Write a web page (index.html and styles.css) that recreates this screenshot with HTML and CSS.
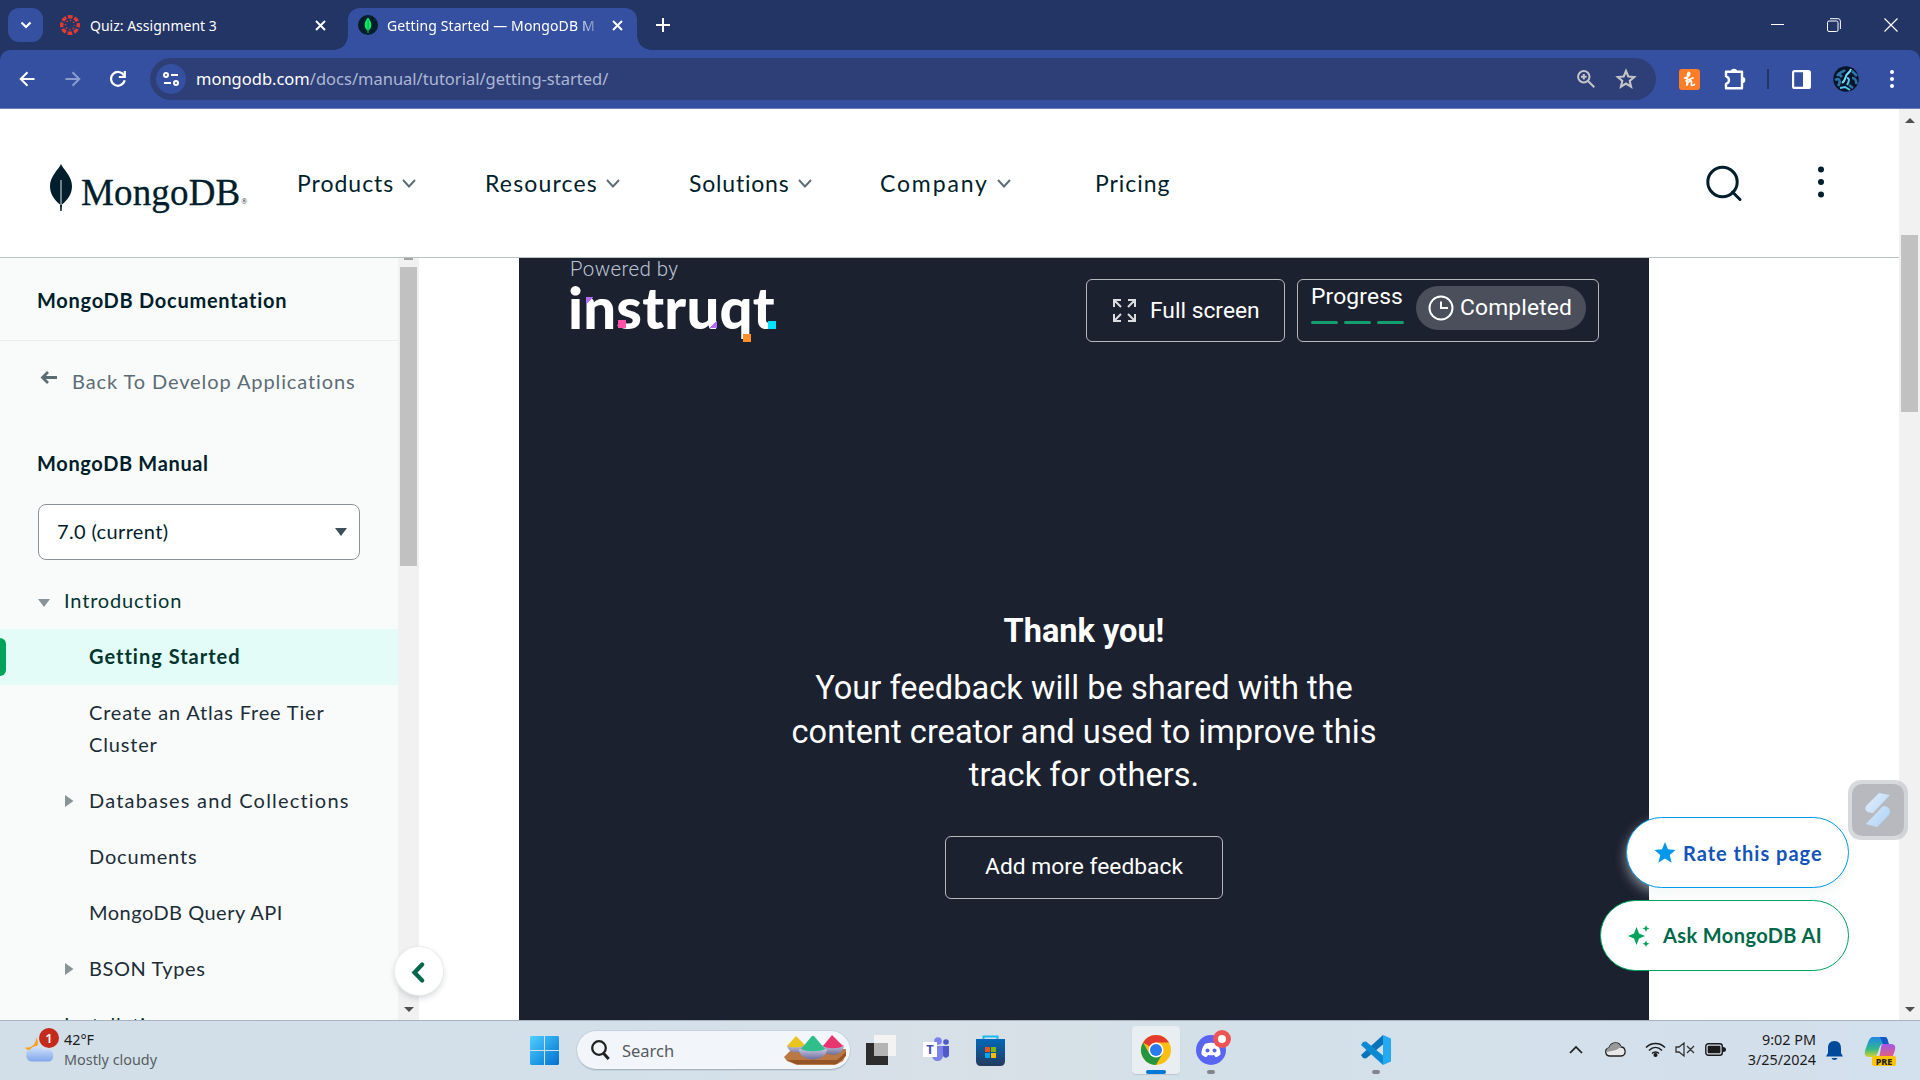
FILE: index.html
```
<!DOCTYPE html>
<html lang="en">
<head>
<meta charset="utf-8">
<title>Getting Started — MongoDB Manual</title>
<link rel="stylesheet" href="styles.css">
</head>
<body>
<header class="tabstrip">
  <div class="tab-search"><svg width="12" height="8" viewBox="0 0 12 8"><path d="M1.500 1.500 6 6l4.500-4.500" fill="none" stroke="#fff" stroke-width="2.200"/></svg></div>
  <div class="tab">
    <svg class="favicon" width="20" height="20" viewBox="0 0 20 20"><circle cx="10" cy="10" r="8.300" fill="none" stroke="#e23b34" stroke-width="3.400" stroke-dasharray="4.700 1.819" stroke-dashoffset="2.350"/><circle cx="10" cy="10" r="4.600" fill="none" stroke="#e23b34" stroke-width="1.500" stroke-dasharray="1.400 2.213" stroke-dashoffset=".7"/></svg>
    <span class="tab-title">Quiz: Assignment 3</span>
    <svg class="x" width="11" height="11" viewBox="0 0 11 11"><path d="m1 1 9 9M10 1l-9 9" stroke="#fff" stroke-width="1.900"/></svg>
  </div>
  <div class="tab active">
    <svg class="favicon" width="20" height="20" viewBox="0 0 20 20"><circle cx="10" cy="10" r="10" fill="#001e2b"/><path d="M10 2.500c2 2.500 3.300 4.300 3.300 7.200 0 2.800-1.200 4.500-2.900 5.900V18h-.8v-2.400C8 14.200 6.700 12.500 6.700 9.700 6.700 6.800 8 5 10 2.500z" fill="#00ed64"/><path d="M10.100 5v11" stroke="#00a35c" stroke-width="1"/></svg>
    <span class="tab-title">Getting Started — MongoDB M</span>
    <svg class="x" width="11" height="11" viewBox="0 0 11 11"><path d="m1 1 9 9M10 1l-9 9" stroke="#fff" stroke-width="1.900"/></svg>
  </div>
  <svg class="plus" width="14" height="14" viewBox="0 0 14 14"><path d="M7 0v14M0 7h14" stroke="#fff" stroke-width="2"/></svg>
  <div class="window-controls">
    <svg width="13" height="13" viewBox="0 0 13 13"><path d="M0 6.500h13" stroke="#fff"/></svg>
    <svg width="14" height="14" viewBox="0 0 14 14" fill="none" stroke="#fff"><rect x=".5" y="3" width="10.500" height="10.500" rx="1.500"/><path d="M3 .7h8a2.400 2.400 0 0 1 2.400 2.400V11"/></svg>
    <svg width="14" height="14" viewBox="0 0 14 14"><path d="m.5.5 13 13M13.500.5l-13 13" stroke="#fff" stroke-width="1.200"/></svg>
  </div>
</header>
<div class="toolbar-back">
<nav class="toolbar">
  <svg width="16" height="16" viewBox="0 0 16 16" fill="none" stroke="#fff" stroke-width="2"><path d="M15.500 8H2M8.500 1.200 1.700 8l6.800 6.800"/></svg>
  <svg width="16" height="16" viewBox="0 0 16 16" fill="none" stroke="#8a9bce" stroke-width="2"><path d="M.5 8H14M7.500 1.200 14.300 8l-6.800 6.800"/></svg>
  <svg width="18" height="18" viewBox="0 0 18 18" fill="none" stroke="#fff" stroke-width="2.200"><path d="M15 5.500A6.900 6.900 0 1 0 15.700 10.300"/><path d="M15.800 1v6h-6"/></svg>
  <div class="omnibox">
    <span class="site-info"><svg width="18" height="14" viewBox="0 0 18 14" fill="none" stroke="#fff" stroke-width="2"><circle cx="4" cy="3" r="2"/><path d="M9 3h7M2 11h7"/><circle cx="14" cy="11" r="2"/></svg></span>
    <span class="url"><b>mongodb.com</b>/docs/manual/tutorial/getting-started/</span>
    <svg class="zoom" width="18" height="18" viewBox="0 0 18 18" fill="none" stroke="#c3c5c9" stroke-width="2"><circle cx="6.800" cy="6.800" r="5.700"/><path d="m11 11 6.300 6.300M6.800 4v5.600M4 6.800h5.600"/></svg>
    <svg width="20" height="20" viewBox="0 0 20 20"><path d="m10 2 2.300 5.500 5.900.5-4.500 3.900 1.400 5.800-5.100-3.100-5.100 3.100 1.400-5.800L1.800 8l5.900-.5z" fill="none" stroke="#c3c5c9" stroke-width="2.100"/></svg>
  </div>
  <svg class="honey" width="21" height="21" viewBox="0 0 21 21"><rect width="21" height="21" rx="3" fill="#ff7d27"/><path d="M5.500 9c4 .5 6.500-5 4.500-5.500C8.300 3 8 9 7.800 16.500c1-4.500 5.200-6.500 4.700-3-.3 2.500-.3 4 3 2M7 11.500l7-2.500" fill="none" stroke="#fff" stroke-width="1.700" stroke-linecap="round"/></svg>
  <svg class="puzzle" width="22" height="22" viewBox="0 0 22 22" fill="none" stroke="#fff" stroke-width="2.400" stroke-linejoin="round"><path d="M2 3.800h16V20.300H2v-4.500c4-1 4-6.500 0-7.500z"/><path d="M7.500 3.500C7.500.6 12.500.6 12.500 3.500M18.500 9.500c3 0 3 5 0 5" fill="#fff" stroke-width="1.200"/></svg>
  <i class="divider"></i>
  <svg class="panel-icon" width="19" height="19" viewBox="0 0 19 19"><rect x="1.100" y="1.100" width="16.800" height="16.800" rx="1.500" fill="none" stroke="#fff" stroke-width="2.200"/><path d="M11 1h7v17h-7z" fill="#fff"/></svg>
  <svg class="avatar" width="26" height="26" viewBox="0 0 26 26"><circle cx="13" cy="13" r="12.700" fill="#07142a"/><path d="M4 10c3-5 5-3 8-6M2 14c5-3 6 2 3 6M19 5l5 5M19 12c3 0 5 3 4 6M5 7l4 4M16 19l4 3" stroke="#2a75a6" stroke-width="2.600" fill="none"/><path d="M18 3c-1 4-4 4-5 7s-1 5-4 7" stroke="#79dcf5" stroke-width="2" fill="none"/><path d="M14 12c3 0 2 4 0 7M7 22l5-1 5 3" stroke="#58c8ea" stroke-width="2" fill="none"/></svg>
  <svg class="dots" width="4" height="18" viewBox="0 0 4 18" fill="#fff"><circle cx="2" cy="2" r="2"/><circle cx="2" cy="9" r="2"/><circle cx="2" cy="16" r="2"/></svg>
</nav>
</div>

<div class="viewport">
  <div class="page">
    <header class="site-header">
      <a class="brand"><svg width="22" height="47" viewBox="0 0 22 47"><path d="M11 0c2.500 5.500 11 12.500 11 22 0 8-4.300 14-10 18.500L11.700 47h-1.400L10 40.500C4.300 36 0 30 0 22 0 12.500 8.500 5.500 11 0z" fill="#001e2b"/><path d="M11 16v25" stroke="#dfe5e6" stroke-width="1"/></svg><span>MongoDB</span><small>®</small></a>
      <a class="nav products">Products<svg class="chev" viewBox="0 0 14 9"><path d="m1 1 6 6.500L13 1"/></svg></a>
      <a class="nav resources">Resources<svg class="chev" viewBox="0 0 14 9"><path d="m1 1 6 6.500L13 1"/></svg></a>
      <a class="nav solutions">Solutions<svg class="chev" viewBox="0 0 14 9"><path d="m1 1 6 6.500L13 1"/></svg></a>
      <a class="nav company">Company<svg class="chev" viewBox="0 0 14 9"><path d="m1 1 6 6.500L13 1"/></svg></a>
      <a class="nav pricing">Pricing</a>
      <svg class="site-search" width="36" height="36" viewBox="0 0 36 36" fill="none" stroke="#001e2b" stroke-width="3" stroke-linecap="round"><circle cx="16.500" cy="17" r="14.700"/><path d="m26.500 27 7.500 7.500"/></svg>
      <svg class="kebab" width="6" height="32" viewBox="0 0 6 32" fill="#001e2b"><circle cx="3" cy="3.500" r="3"/><circle cx="3" cy="16" r="3"/><circle cx="3" cy="28.500" r="3"/></svg>
    </header>
    <div class="body">
      <aside class="sidebar">
        <h2>MongoDB Documentation</h2>
        <a class="back"><svg width="17" height="13" viewBox="0 0 17 13" fill="none" stroke="#5c6c75" stroke-width="2.800"><path d="M17 6.500H2.500M8 1 2.500 6.500 8 12"/></svg><span>Back To Develop Applications</span></a>
        <h3>MongoDB Manual</h3>
        <div class="select"><span>7.0 (current)</span><svg width="12" height="8" viewBox="0 0 12 8"><path d="M0 0h12L6 8z" fill="#3d4f58"/></svg></div>
        <ul class="tree">
          <li class="top"><svg width="12" height="8" viewBox="0 0 12 8"><path d="M0 0h12L6 8z" fill="#889397"/></svg><span class="intro">Introduction</span></li>
          <li class="current"><span>Getting Started</span></li>
          <li class="two-line"><span>Create an Atlas Free Tier<br>Cluster</span></li>
          <li><svg width="9" height="12" viewBox="0 0 9 12"><path d="M0 0v12l8.500-6z" fill="#889397"/></svg><span class="databases">Databases and Collections</span></li>
          <li><span>Documents</span></li>
          <li><span class="query">MongoDB Query API</span></li>
          <li><svg width="9" height="12" viewBox="0 0 9 12"><path d="M0 0v12l8.500-6z" fill="#889397"/></svg><span class="bson">BSON Types</span></li>
          <li class="top last"><span>Installation</span></li>
        </ul>
      </aside>
      <div class="side-scroll"><i class="up"></i><i class="thumb"></i><i class="down"></i></div>
      <main>
        <section class="panel">
          <div class="panel-head">
            <div class="powered"><p>Powered by</p>
              <div class="instruqt">instruqt<i class="p1"></i><i class="p2"></i><i class="p3"></i><i class="p4"></i><i class="p5"></i></div>
            </div>
            <div class="outline full"><svg width="23" height="23" viewBox="0 0 23 23" fill="none" stroke="#dadce0" stroke-width="2"><path d="M1 8V1h7M1 1l7 7M15 1h7v7M22 1l-7 7M1 15v7h7M1 22l7-7M22 15v7h-7M22 22l-7-7"/></svg><span>Full screen</span></div>
            <div class="outline progress">
              <div class="steps"><span>Progress</span><div class="bars"><i></i><i></i><i></i></div></div>
              <div class="pill"><svg width="26" height="26" viewBox="0 0 26 26" fill="none" stroke="#fff" stroke-width="2"><circle cx="13" cy="13" r="11.500"/><path d="M13 6.500V13h7"/></svg><span>Completed</span></div>
            </div>
          </div>
          <div class="thanks">
            <h1>Thank you!</h1>
            <p>Your feedback will be shared with the<br>content creator and used to improve this<br>track for others.</p>
            <div class="outline add">Add more feedback</div>
          </div>
        </section>
      </main>
    </div>
  </div>
  <div class="page-scroll"><i class="up"></i><i class="thumb"></i><i class="down"></i></div>
  <div class="collapse"><svg width="14" height="21" viewBox="0 0 14 21" fill="none" stroke="#00684a" stroke-width="4.200" stroke-linecap="round"><path d="M10.200 3.500 2.500 11.500l7.700 8"/></svg></div>
  <div class="extension"><div><svg width="26" height="34" viewBox="0 0 26 34"><defs><linearGradient id="ext" x2="1" y2="1"><stop stop-color="#e4effa"/><stop offset="1" stop-color="#acd1f8"/></linearGradient></defs><path d="M14 0 25 2 8 20C-1 20-1 14 3 11zM1 31l17-18c7 0 9 6 5 10L12 34z" fill="url(#ext)"/></svg></div></div>
  <div class="fab rate"><svg width="22" height="21" viewBox="0 0 22 21"><path d="m11 0 3 7.300 7.500.6-5.700 5 1.800 7.800-6.600-4.200-6.600 4.200 1.800-7.800-5.700-5L8 7.300z" fill="#0498ec"/></svg><span>Rate this page</span></div>
  <div class="fab ask"><svg width="22" height="22" viewBox="0 0 22 22" fill="#00a35c"><path d="M8.500 2 11 8.500l6 2.500-6 2.500L8.500 20 6 13.500 0 11l6-2.500zM18 0l1 2.400 2.500 1-2.500 1L18 7l-1-2.600-2.500-1 2.500-1zM18 15.500l1 2.200 2.500 1-2.500 1-1 2.300-1-2.300-2.500-1 2.500-1z"/></svg><span>Ask MongoDB AI</span></div>
</div>

<footer class="taskbar">
  <div class="weather">
    <svg width="34" height="32" viewBox="0 0 34 32"><defs><linearGradient id="cl" x2="0" y2="1"><stop stop-color="#d5e5fb"/><stop offset="1" stop-color="#7fa5ea"/></linearGradient></defs><path d="M12 5c4 6 1 13-6 14-3 0-5-1-6-3 7 1 12-4 12-11z" fill="#f6a21d"/><path d="M7 31a7 7 0 0 1-1-13.500C9 13 18 13 20 19c5-2 10 0 10 6s-5 6-6 6z" fill="url(#cl)"/></svg>
    <b class="badge">1</b>
    <p>42°F<br><span>Mostly cloudy</span></p>
  </div>
  <svg class="windows" width="29" height="29" viewBox="0 0 29 29"><defs><linearGradient id="win" x2="1" y2="1"><stop stop-color="#4fd0ff"/><stop offset="1" stop-color="#006fd0"/></linearGradient></defs><path d="M1 0h13v14H0V1zM15 0h13l1 1v13H15zM0 15h14v14H1l-1-1zM15 15h14v13l-1 1H15z" fill="url(#win)"/></svg>
  <div class="search">
    <svg width="19" height="21" viewBox="0 0 19 21" fill="none" stroke="#222" stroke-width="2.300"><circle cx="8" cy="8" r="6.800"/><path d="m12.700 13.500 5 5.500" stroke-width="3"/></svg>
    <span>Search</span>
    <svg class="bowls" width="63" height="30" viewBox="0 0 63 30"><defs><linearGradient id="bowl" x2="0" y2="1"><stop stop-color="#c4c4e0"/><stop offset="1" stop-color="#6f6d9c"/></linearGradient></defs><path d="M0 22 8 14h54v5l-3 7-8 4H13L3 26z" fill="#b97844"/><path d="M3 25h50l9-8v4l-9 8H12z" fill="#955426"/><path d="M3 10h20c0 10-20 10-20 0zM38 10h22c0 13-22 13-22 0z" fill="url(#bowl)"/><path d="M3 11 12 1l9 9c-4 3-14 3-18 1z" fill="#eac51f"/><path d="M39 11 48 0l11 11c-4 3-16 3-20 0z" fill="#e8346f"/><path d="M15 14h28c0 14-28 14-28 0z" fill="url(#bowl)"/><path d="M17 14 28 1h2l11 13c-5 3-19 3-24 0z" fill="#2ebf8b"/></svg>
  </div>
  <svg class="taskview" width="30" height="30" viewBox="0 0 30 30"><path d="M0 8h22v22H0z" fill="#2d2d2d"/><path d="M8 0h22v21H8z" fill="#f3f3f3"/><path d="M8 8h14v13H8z" fill="#b4b4b4"/></svg>
  <svg class="teams" width="27" height="25" viewBox="0 0 27 25"><circle cx="15" cy="4" r="3.800" fill="#7b83eb"/><circle cx="23" cy="5" r="2.800" fill="#5059c9"/><path d="M20 9h6v9c0 3-6 4-6 0z" fill="#5059c9"/><path d="M9 9h11v9c0 8-11 8-11 0z" fill="#7b83eb"/><path d="M0 5h14v15H0z" fill="#fff"/><text x="7" y="17" text-anchor="middle" class="teams-t">T</text></svg>
  <svg class="store" width="29" height="31" viewBox="0 0 29 31"><defs><linearGradient id="st" x2="0" y2="1"><stop stop-color="#0068b8"/><stop offset="1" stop-color="#243a5e"/></linearGradient></defs><path d="M7.500 6V1.500h14V6" fill="none" stroke="#1cb8f2" stroke-width="2"/><path d="M0 4h29v22q0 5-5 5H5q-5 0-5-5z" fill="url(#st)"/><path d="M9 12h5v5H9z" fill="#f25022"/><path d="M15 12h5v5h-5z" fill="#7fba00"/><path d="M9 18h5v5H9z" fill="#00a4ef"/><path d="M15 18h5v5h-5z" fill="#ffb900"/></svg>
  <div class="app chrome"><svg width="30" height="30" viewBox="0 0 30 30"><circle cx="15" cy="15" r="15" fill="#fbbf12"/><path d="M15 15 2 7.500a15 15 0 0 1 26 0H15z" fill="#e33b2e"/><path d="M2 7.500A15 15 0 0 0 15 30l6.500-11.200L15 15 8.500 18.800z" fill="#24963f"/><circle cx="15" cy="15" r="7.500" fill="#fff"/><circle cx="15" cy="15" r="6" fill="#2a7af0"/></svg><i></i></div>
  <div class="app discord"><svg width="36" height="36" viewBox="0 0 36 36"><circle cx="15" cy="21" r="15" fill="#5865f2"/><path d="M10 14.500q5-1.500 10 0c2 0 5 7 4.500 11-2 2-4 2.500-5 2.500l-1.500-2q-3 .7-6 0L10.500 28c-1 0-3-.5-5-2.500-.5-4 2.500-11 4.500-11z" fill="#fff"/><circle cx="11.500" cy="21.500" r="2" fill="#5865f2"/><circle cx="18.500" cy="21.500" r="2" fill="#5865f2"/><circle cx="26" cy="10" r="9" fill="#ee5454"/><circle cx="26" cy="10" r="4" fill="#fff"/></svg><i></i></div>
  <div class="app code"><svg width="30" height="30" viewBox="0 0 30 30"><path d="M22 0 0 20l2 3 3 .5L22 9.500z" fill="#0873ba"/><path d="M22 30 0 10l2-3 3-.5 17 14z" fill="#0a8ad2"/><path d="m22 0 8 3.500v23L22 30z" fill="#24a9f2"/></svg><i></i></div>
  <div class="tray">
    <svg class="t-chev" width="14" height="9" viewBox="0 0 14 9"><path d="m1 8 6-6 6 6" fill="none" stroke="#1b1b1b" stroke-width="1.700"/></svg>
    <svg class="t-cloud" width="21" height="15" viewBox="0 0 21 15"><path d="M5 14C0 14-1 7 4 6c2-6 10-7 12-1 5 0 6 9 0 9z" fill="#e8e8e8" stroke="#222" stroke-width="1.300"/><path d="M2 10C1 8 2 6 4 6c2-6 10-7 12-1l-5 3z" fill="#999"/></svg>
    <svg class="t-wifi" width="21" height="15" viewBox="0 0 21 15" fill="none" stroke="#1b1b1b" stroke-width="1.500"><path d="M1 5.500c5-5.500 14-5.500 19 0M4 8.500c4-4 9-4 13 0M7 11.500c2-2 5-2 7 0"/><circle cx="10.500" cy="13" r="1.300" fill="#1b1b1b"/></svg>
    <svg class="t-mute" width="20" height="15" viewBox="0 0 20 15" fill="none" stroke="#333" stroke-width="1.300"><path d="M1 5h3l5-4v13l-5-4H1zM12 4l7 7M19 4l-7 7"/></svg>
    <svg class="t-bat" width="21" height="13" viewBox="0 0 21 13"><rect x=".8" y=".8" width="16.500" height="11.400" rx="2.500" fill="none" stroke="#1b1b1b" stroke-width="1.400"/><rect x="2.700" y="2.700" width="12.700" height="7.600" rx="1" fill="#1b1b1b"/><path d="M18 4q3 0 3 2.500T18 9z" fill="#1b1b1b"/></svg>
    <p class="clock">9:02 PM<br>3/25/2024</p>
    <svg class="t-bell" width="17" height="20" viewBox="0 0 17 20" fill="#004a9c"><path d="M8.500 0C13 0 15 3 15 7v5l2 3.500H0L2 12V7c0-4 2-7 6.500-7zM5.500 17h6c-1 2.500-5 2.500-6 0z"/></svg>
    <svg class="t-copilot" width="31" height="30" viewBox="0 0 31 30"><defs><linearGradient id="ca" x2="0" y2="1"><stop stop-color="#1e86e8"/><stop offset=".6" stop-color="#32b88b"/><stop offset="1" stop-color="#d8d22f"/></linearGradient><linearGradient id="cb" x2="0" y2="1"><stop stop-color="#a257e8"/><stop offset="1" stop-color="#f6645a"/></linearGradient></defs><path d="M8 1h12c3 0 3 6 4 7h-6c-5 0-4 13-9 13H4c-5 0-5-4-3-9S4 1 8 1z" fill="url(#ca)"/><path d="M15 1h5c3 0 3 6 4 7h-6z" fill="#1457c6"/><path d="M18 8h8c5 0 5 4 3 9s-2 8-6 8H12c4-3 3-17 6-17z" fill="url(#cb)"/><rect x="7" y="20" width="24" height="10" rx="2" fill="#ffc400"/><text x="19" y="28.500" text-anchor="middle" class="pre">PRE</text></svg>
  </div>
</footer>
</body>
</html>
```
FILE: styles.css
```
* { box-sizing: border-box; }
body { margin: 0; width: 1920px; height: 1080px; overflow: hidden; display: flex; flex-direction: column; background: #fff; font-family: Lato, sans-serif; color: #001e2b; }
h1, h2, h3, p, ul { margin: 0; padding: 0; }
svg { display: block; flex: none; overflow: visible; }
i { display: block; flex: none; }

/* browser chrome */
.tabstrip { height: 50px; flex: none; display: flex; align-items: flex-start; padding-left: 8px; background: #233565; color: #fff; font: 14px/34px "Noto Sans", sans-serif; }
.tab-search { width: 35px; height: 34px; margin-top: 8px; border-radius: 11px; background: #3550a0; display: grid; place-items: center; }
.tab { display: flex; align-items: center; height: 34px; margin-top: 8px; padding-left: 17px; width: 305px; white-space: nowrap; }
.tab-title { width: 208px; height: 34px; line-height: 35px; overflow: hidden; margin-left: 10px; }
.tab .x { margin-left: 17px; }
.tab.active { position: relative; height: 42px; width: 289px; padding: 0 0 8px 10px; border-radius: 12px 12px 0 0; background: #3550a0; }
.tab.active::before, .tab.active::after { content: ""; position: absolute; bottom: 0; width: 14px; height: 14px; }
.tab.active::before { left: -14px; background: radial-gradient(circle at 0 0, transparent 13.500px, #3550a0 14px); }
.tab.active::after { right: -14px; background: radial-gradient(circle at 100% 0, transparent 13.500px, #3550a0 14px); }
.tab.active .tab-title { margin-left: 9px; letter-spacing: .12px; -webkit-mask-image: linear-gradient(90deg, #000 190px, transparent 216px); mask-image: linear-gradient(90deg, #000 190px, transparent 216px); }
.plus { margin: 18px 0 0 19px; }
.window-controls { margin: 18px 22px 0 auto; display: flex; gap: 43px; }
.toolbar-back { background: #233565; flex: none; }
.toolbar { height: 59px; display: flex; align-items: center; padding: 0 26px 0 19px; background: #3550a0; border-bottom: 1px solid #6a7dbb; border-radius: 10px 10px 0 0; }
.toolbar > svg:nth-child(2) { margin-left: 30px; }
.toolbar > svg:nth-child(3) { margin-left: 28px; }
.omnibox { width: 1508px; height: 42px; margin-left: 23px; padding: 0 20px 0 6px; border-radius: 21px; background: #2e3f77; display: flex; align-items: center; }
.site-info { width: 30px; height: 30px; border-radius: 50%; background: #3550a0; display: grid; place-items: center; }
.url { margin-left: 10px; flex: 1; font: 16.500px/24px "Noto Sans", sans-serif; color: #adb7d5; }
.url b { font-weight: 400; color: #fff; }
.zoom { margin-right: 21px; }
.honey { margin-left: 23px; }
.puzzle { margin-left: 24px; }
.divider { width: 2px; height: 20px; margin-left: 21px; background: #233565; }
.panel-icon { margin-left: 23px; }
.avatar { margin-left: 22px; }
.dots { margin-left: 31px; }

/* document area */
.viewport { position: relative; flex: 1; min-height: 0; display: flex; overflow: hidden; }
.page { width: 1899px; display: flex; flex-direction: column; }
.site-header { height: 149px; flex: none; display: flex; border-bottom: 1px solid #b8c4c2; padding: 55px 0 0 50px; }
.brand { display: flex; align-items: flex-start; width: 247px; }
.brand span { font: 37px/40px "Liberation Serif", serif; margin: 9px 0 0 9px; letter-spacing: .15px; -webkit-text-stroke: .3px #001e2b; }
.brand small { font: 8px/10px "Liberation Serif", serif; margin: 33px 0 0 1px; }
.nav { display: flex; align-items: center; height: 40px; font-size: 23px; line-height: 39px; }
.nav { padding-bottom: 1px; }
.chev { width: 14px; height: 9px; margin: 0 0 0 8px; fill: none; stroke: #5c6c75; stroke-width: 1.900; }
.products { letter-spacing: .98px; width: 188px; }
.resources { letter-spacing: 1.160px; width: 204px; }
.solutions { letter-spacing: .8px; width: 191px; }
.company { letter-spacing: 1.850px; width: 215px; }
.pricing { letter-spacing: .95px; }
.site-search { margin: 1px 0 0 auto; }
.kebab { margin: 2px 75px 0 76px; }
.body { flex: 1; min-height: 0; display: flex; }
.sidebar { width: 398px; height: 762px; overflow: hidden; background: #f9fbfa; font-size: 20px; }
.sidebar h2 { height: 83px; padding: 26px 0 0 37px; border-bottom: 1px solid #e8edeb; font: 700 20px/32px Lato, sans-serif; letter-spacing: .73px; }
.back { display: flex; align-items: center; height: 32px; margin-top: 24px; padding-left: 40px; color: #5c6c75; letter-spacing: .9px; line-height: 32px; }
.back span { margin-left: 15px; }
.back svg { margin-top: -8px; }
.sidebar h3 { margin: 50px 0 0 37px; font: 700 20px/32px Lato, sans-serif; letter-spacing: .65px; }
.select { display: flex; justify-content: space-between; align-items: center; width: 322px; height: 56px; margin: 25px 0 0 38px; padding: 0 12px 0 18px; border: 1px solid #889397; border-radius: 8px; background: #fff; letter-spacing: .36px; }
.select span { margin-top: -2px; }
.tree { list-style: none; margin-top: 13px; letter-spacing: .83px; line-height: 32px; color: #1c2d38; }
.tree li { display: flex; align-items: center; height: 56px; padding-left: 89px; }
.tree li span { margin-top: -2px; }
.tree li svg { margin-left: -24px; margin-right: 15px; }
.tree .top { padding-left: 64px; color: #023430; }
.tree .top svg { margin: 3px 14px 0 -26px; }
.tree .two-line { height: 88px; }
.tree .current { position: relative; background: #e3fcf7; color: #023430; font-weight: 700; letter-spacing: 1px; }
.tree .current::before { content: ""; position: absolute; left: 0; top: 9px; width: 6px; height: 38px; border-radius: 0 6px 6px 0; background: #00a35c; }
.databases { letter-spacing: 1.200px; }
.query { letter-spacing: .48px; }
.bson { letter-spacing: .6px; }
.side-scroll { width: 21px; height: 762px; background: #f1f1f1; display: flex; flex-direction: column; align-items: center; }
.side-scroll .up { width: 9px; height: 2px; background: #a3a3a3; }
.side-scroll .thumb { width: 17px; height: 299px; margin: 7px 0 441px; background: #c1c1c1; }
.down { width: 0; height: 0; border: 5px solid transparent; border-top-color: #505050; border-bottom: 0; }
.page-scroll { width: 21px; background: #f1f1f1; display: flex; flex-direction: column; align-items: center; }
.page-scroll .up { width: 0; height: 0; margin-top: 9px; border: 5px solid transparent; border-bottom-color: #505050; border-top: 0; }
.page-scroll .thumb { width: 17px; height: 177px; margin: 112px 0 595px; background: #c1c1c1; }
main { padding-left: 100px; }

.panel { width: 1130px; height: 762px; background: #1c2130; color: #fff; font-family: Roboto, sans-serif; }
.panel-head { height: 110px; display: flex; align-items: flex-start; padding: 0 50px 0 51px; }
.powered { width: 516px; }
.powered p { font-weight: 300; font-size: 20.500px; line-height: 24px; margin-top: -1px; color: #b9c0d0; letter-spacing: .37px; }
.instruqt { position: relative; width: 210px; height: 60px; margin-left: -2px; font: 900 58px/51px Lato, sans-serif; letter-spacing: .2px; white-space: nowrap; }
.instruqt i { position: absolute; width: 8px; height: 8px; }
.p1 { left: 18px; top: 16px; background: linear-gradient(135deg, #b56cff 50%, transparent 50%); }
.p2 { left: 50px; top: 39px; background: #ff52a8; }
.p3 { left: 141px; top: 39px; background: linear-gradient(315deg, #b56cff 50%, transparent 50%); }
.p4 { left: 175px; top: 53px; background: #ff8f29; }
.p5 { left: 200px; top: 40px; background: #00e1ff; }
.outline { border: 1px solid #b5b8bd; border-radius: 6px; height: 63px; margin-top: 21px; font-size: 22.800px; display: flex; }
.full { width: 199px; align-items: center; padding-left: 26px; }
.full span { margin-left: 14px; margin-top: -1px; }
.progress { width: 302px; margin-left: 12px; padding-left: 13px; }
.steps { width: 93px; line-height: 34px; letter-spacing: .15px; }
.bars { display: flex; gap: 6px; margin-top: 7px; }
.bars i { width: 27px; height: 3px; border-radius: 2px; background: #159e70; }
.pill { display: flex; align-items: center; width: 170px; height: 44px; margin: 6px 0 0 12px; border-radius: 22px; background: #4a4f5b; padding-left: 12px; }
.pill span { margin-left: 6px; margin-top: -1px; letter-spacing: .15px; }
.thanks { padding-top: 242px; text-align: center; display: flex; flex-direction: column; align-items: center; }
.thanks h1 { font-size: 32.500px; line-height: 42px; }
.thanks p { margin-top: 15px; font-size: 32.600px; line-height: 43.500px; }
.add { width: 278px; height: 63px; margin-top: 38px; justify-content: center; align-items: center; padding-bottom: 1px; }

/* floating controls */
.collapse { position: absolute; left: 395px; top: 838px; width: 48px; height: 48px; border-radius: 50%; background: #fff; box-shadow: 0 0 0 1px #e8edeb, 0 3px 6px rgba(0, 30, 43, .18); display: grid; place-items: center; }
.extension { position: absolute; left: 1848px; top: 671px; width: 60px; height: 60px; padding: 4px; border-radius: 13px; background: rgba(190, 191, 198, .6); }
.extension div { height: 52px; border-radius: 10px; background: #b8b9bf; display: grid; place-items: center; }
.fab { position: absolute; right: 71px; height: 71px; border: 1px solid; border-radius: 36px; background: #fff; display: flex; align-items: center; font-size: 20px; font-weight: 700; }
.rate { top: 708px; width: 223px; padding-left: 27px; border-color: #0498ec; color: #1254b7; letter-spacing: 1px; box-shadow: 0 5px 12px rgba(230, 240, 238, .5); }
.rate span { margin: 0 0 0 7px; }
.ask { top: 791px; width: 249px; padding-left: 27px; border-color: #00a35c; color: #00684a; letter-spacing: .4px; }
.ask span { margin: -1px 0 0 13px; }

/* taskbar */
.taskbar { height: 60px; flex: none; display: flex; align-items: flex-start; border-top: 1px solid #a9b3bf; background: linear-gradient(90deg, #d2dfe9 0, #d3e0ea 620px, #d8e0e7 980px, #d4e0e8 1150px, #d3e0ed); font: 14.400px/20px "Noto Sans", sans-serif; color: #1b1b1b; }
.weather { position: relative; display: flex; width: 505px; padding-left: 25px; }
.weather > svg { margin-top: 11px; width: 32px; height: 31px; }
.weather p { margin: 9px 0 0 7px; }
.weather p span { color: #585d61; }
.badge { position: absolute; left: 39px; top: 7px; width: 20px; height: 20px; border-radius: 50%; background: #c42b1c; color: #fff; font: 600 13px/20px "Noto Sans", sans-serif; text-align: center; }
.windows { margin: 15px 0 0 25px; }
.search { display: flex; align-items: center; width: 273px; height: 39px; margin: 10px 0 0 18px; padding-left: 14px; border-radius: 20px; background: #f2f6fa; border-bottom: 1px solid #aab4bd; font-size: 16.500px; color: #565a5e; box-shadow: 0 0 0 1px rgba(160, 180, 200, .3); }
.search span { margin-left: 12px; margin-top: 1px; }
.bowls { margin-left: auto; margin-right: 3px; }
.taskview { margin: 14px 0 0 16px; }
.teams { margin: 16px 0 0 27px; }
.teams-t { font: 700 13px "Noto Sans", sans-serif; fill: #4b53bc; }
.store { margin: 14px 0 0 26px; }
.app { width: 48px; height: 48px; margin-top: 5px; display: flex; flex-direction: column; align-items: center; padding-top: 9px; position: relative; }
.app > i { position: absolute; bottom: 0; width: 8px; height: 4px; border-radius: 2px; background: #80868b; }
.chrome { margin-left: 127px; background: #e9eef3; border-radius: 4px; box-shadow: 0 1px 1px #bcc6ce; }
.chrome > i { width: 20px; background: #0078d4; }
.discord { margin-left: 7px; }
.discord svg { margin: -6px -6px 0 0; }
.code { margin-left: 117px; }
.tray { display: flex; align-items: flex-start; margin-left: auto; padding-right: 24px; }
.t-chev { margin: 24px 22px 0 0; }
.t-cloud { margin: 21px 19px 0 0; }
.t-wifi { margin: 21px 9px 0 0; }
.t-mute { margin: 21px 10px 0 0; }
.t-bat { margin: 22px 0 0; }
.clock { width: 90px; margin: 9px 10px 0 0; text-align: right; }
.t-bell { margin: 20px 22px 0 0; }
.t-copilot { margin-top: 15px; }
.pre { font: 800 9px "Noto Sans", sans-serif; fill: #222; }
```
